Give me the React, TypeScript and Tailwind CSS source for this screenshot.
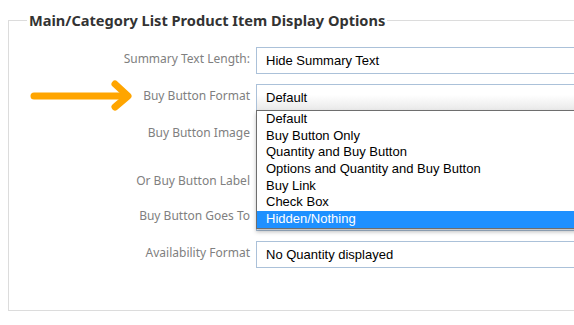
const options = [
  "Default",
  "Buy Button Only",
  "Quantity and Buy Button",
  "Options and Quantity and Buy Button",
  "Buy Link",
  "Check Box",
  "Hidden/Nothing",
];

const rows = [
  { label: "Summary Text Length:", value: "Hide Summary Text", h: "h-[37px]" },
  { label: "Buy Button Format", value: "Default", h: "h-[37px]", select: true },
  { label: "Buy Button Image", value: "", h: "h-[48px]" },
  { label: "Or Buy Button Label", value: "", h: "h-[35px]" },
  { label: "Buy Button Goes To", value: "", h: "h-[37px]" },
  { label: "Availability Format", value: "No Quantity displayed", h: "h-[27px]" },
];

export default function App() {
  return (
    <div className="relative w-[574px] h-[325px] overflow-hidden bg-white font-['Noto_Sans',sans-serif]">
      <div className="pt-[10px] pl-2">
        <fieldset className="w-[620px] border border-[#dcdcdc] pb-[42px]">
          <legend className="ml-[18px] px-[2px] text-[14.6px] leading-[20px] font-bold text-[#333]">
            Main/Category List Product Item Display Options
          </legend>
          <div className="flex flex-col pt-[17px]">
            {rows.map((r) => (
              <div key={r.label} className={`flex items-start ${r.h}`}>
                <div className="w-[241px] shrink-0 pt-[3px] text-right text-[12px] leading-[17px] text-[#808080]">
                  {r.label}
                </div>
                {r.label === "Buy Button Image" ? null : (
                  <div
                    className={`ml-[6px] flex h-[27px] w-[360px] items-center border border-[#abc1d9] pl-[9px] font-['Liberation_Sans',Arial,sans-serif] text-[13px] text-black ${
                      r.select ? "bg-gradient-to-b from-white from-40% to-[#e9e9e9]" : "bg-white"
                    }`}
                  >
                    {r.value}
                  </div>
                )}
              </div>
            ))}
          </div>
        </fieldset>
      </div>

      {/* open dropdown list */}
      <div className="absolute left-[256px] top-[110px] w-[340px] border border-[#6e6e6e] bg-white shadow-[0_3px_4px_rgba(0,0,0,0.25)] font-['Liberation_Sans',Arial,sans-serif] text-[13px] text-black">
        {options.map((o, i) => (
          <div
            key={o}
            className={`h-[16.7px] pl-[9px] leading-[16.7px] ${
              i === options.length - 1 ? "bg-[#1e90ff] text-white" : ""
            }`}
          >
            {o}
          </div>
        ))}
      </div>

      {/* annotation arrow */}
      <svg className="absolute left-0 top-0" width="140" height="120" viewBox="0 0 140 120">
        <line x1="34" y1="96" x2="126" y2="96" stroke="#ffa500" strokeWidth="7" strokeLinecap="round" />
        <polyline
          points="115,84 128,96 115,107"
          fill="none"
          stroke="#ffa500"
          strokeWidth="7"
          strokeLinecap="round"
          strokeLinejoin="round"
        />
      </svg>
    </div>
  );
}
